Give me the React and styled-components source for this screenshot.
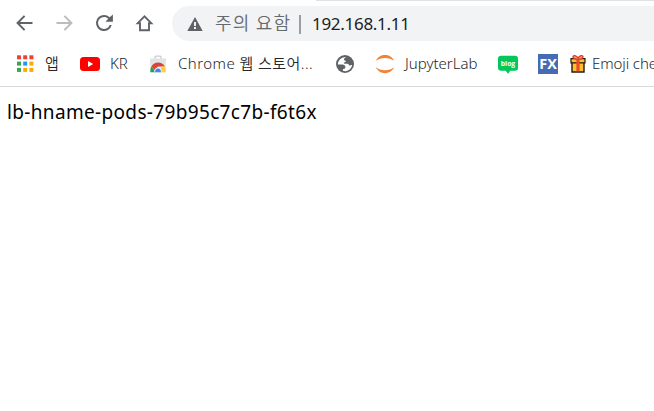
import React from "react";
import styled, { createGlobalStyle } from "styled-components";

const Global = createGlobalStyle`
  * { box-sizing: border-box; }
  html, body { margin: 0; background: #fff; overflow: hidden; }
  body { font-family: "Noto Sans", "Noto Sans CJK KR", sans-serif; }
  svg { display: block; flex: none; }
`;
const Browser = styled.div`
  width: 654px;
  height: 411px;
  overflow: hidden;
  background: #fff;
`;
const TabEdge = styled.div`
  height: 1px;
  margin-left: 316px;
  background: #dee1e6;
`;
const Toolbar = styled.header`
  display: flex;
  height: 40px;
  padding-top: 5px;
`;
const NavButtons = styled.nav`
  display: flex;
  align-items: center;
  gap: 16px;
  padding: 0 15px 1px 12px;
  width: 172px;
  flex: none;
  height: 35px;
`;
const NavButton = styled.button`
  width: 24px;
  height: 24px;
  padding: 0;
  border: 0;
  background: none;
  color: ${(p) => (p.$muted ? "#babcbe" : "#5f6368")};
`;
const Omnibox = styled.div`
  display: flex;
  align-items: center;
  flex: 1;
  height: 35px;
  padding-left: 15px;
  border-radius: 18px 0 0 18px;
  background: #f1f3f4;
  white-space: nowrap;
`;
const Warning = styled.span`
  width: 84px;
  margin-left: 12px;
  color: #66696e;
  font: 350 18px/24px "Noto Sans CJK KR", sans-serif;
  letter-spacing: 1.2px;
  margin-top: -3px;
`;
const Divider = styled.span`
  width: 2px;
  height: 19px;
  background: #9b9ea2;
  margin: 1px 11px 0 0;
`;
const Address = styled.span`
  color: #202124;
  font-size: 17px;
  line-height: 24px;
  letter-spacing: -0.3px;
`;
const Bookmarks = styled.div`
  display: flex;
  align-items: center;
  height: 46px;
  padding-left: 15px;
  border-bottom: 1px solid #d9dadc;
`;
const Bookmark = styled.div`
  display: flex;
  align-items: center;
  flex: none;
  width: ${(p) => p.$width}px;
  gap: ${(p) => p.$gap || 10}px;
`;
const Label = styled.span`
  color: #24272b;
  font: 350 15px/20px "Noto Sans", "Noto Sans CJK KR", sans-serif;
  letter-spacing: ${(p) => p.$track || 0}px;
  white-space: nowrap;
  margin-top: -2px;
`;
const Page = styled.main`
  padding: 12px 7px;
  color: #000;
  font-size: 19px;
  line-height: 26px;
  letter-spacing: 0.34px;
`;

const Back = () => (
  <svg width="24" height="24" fill="none" stroke="currentColor" strokeWidth="2"><path d="M20.5 12H6M12.6 4.9 5.6 12l7 7.1" /></svg>
);
const Forward = () => (
  <svg width="24" height="24" fill="none" stroke="currentColor" strokeWidth="2"><path d="M4.5 12H19M12.4 4.9l7 7.1-7 7.1" /></svg>
);
const Reload = () => (
  <svg width="24" height="24" fill="currentColor"><path d="M17.65 6.35A7.96 7.96 0 0 0 12 4a8 8 0 1 0 7.73 10h-2.08A6 6 0 1 1 12 6c1.66 0 3.14.69 4.22 1.78L13.5 10.8h7.4V3.5z" /></svg>
);
const Home = () => (
  <svg width="24" height="24" fill="none" stroke="currentColor" strokeWidth="1.9"><path d="M5.7 12.2H8v7h9v-7h2.3L12.5 5.3z" /></svg>
);
const Triangle = () => (
  <svg width="16" height="16"><path d="M8 1 15.7 15H.3z" fill="#5f6368" /><path d="M7 6h2v4H7zm0 5h2v2H7z" fill="#f1f3f4" /></svg>
);
const dots = ["#ea4335", "#ea4335", "#ea4335", "#34a853", "#2196f3", "#fbab00", "#34a853", "#fbab00", "#fbab00"];
const Apps = () => (
  <svg width="20" height="20">
    {dots.map((c, i) => <rect key={i} x={2 + (i % 3) * 6.2} y={1.3 + Math.floor(i / 3) * 6.3} width="4" height="4" fill={c} />)}
  </svg>
);
const Youtube = () => (
  <svg width="20" height="20"><rect y="3" width="20" height="14" rx="3.5" fill="#f00" /><path d="m8 7 5.2 3L8 13z" fill="#fff" /></svg>
);
const Store = () => (
  <svg width="20" height="20">
    <path d="M7 5V3.2q0-1 1-1h4q1 0 1 1V5" fill="none" stroke="#c8cacc" strokeWidth="1.3" />
    <path d="M2 4.5h16l-.6 13.7H2.6z" fill="#e2e3e5" />
    <path d="M2.4 17.8a7.6 7.6 0 0 1 1-5.4L8 18.2H2.5z" fill="#1da45b" />
    <path d="M3.4 12.4a7.8 7.8 0 0 1 13.5 0h-7L7 16.5z" fill="#db4437" />
    <path d="M16.9 12.4q1.3 2.6.7 5.8H12l1.3-5.8z" fill="#ffcd40" />
    <path d="M6.3 18.2a3.8 3.8 0 1 1 7.4 0z" fill="#f1f1f1" />
    <path d="M7.2 18.2a2.9 2.9 0 1 1 5.6 0z" fill="#4285f4" />
  </svg>
);
const Globe = () => (
  <svg width="20" height="20">
    <circle cx="10" cy="10" r="9" fill="#5f6368" />
    <path d="M11.2 2.9c-1.2.5-2.5 1.6-2.2 2.9.2 1 1.6.4 1.7 1.5.1 1-.7 1-1.5 1.2-.6.2-.4 1.3.4 1.3h3.1c1 0 .8 1.7 2 1.8.8 0 1.3-.7 2.4-.5-.4 3.3-3.2 6-6.7 6.1-.9 0-1.8-.1-2.5-.4V15c1.2 0 2.5-.3 2.5-1.7 0-1.8-1.3-2.6-3.1-2.7H2.9c-.2-3.8 3-7.9 8.3-7.7z" fill="#fff" />
  </svg>
);
const Jupyter = () => (
  <svg width="20" height="20" fill="#f58132"><path d="M.9 6.8C4.3-1.1 15.7-1.1 19.1 6.8 14.8 2.9 5.2 2.9.9 6.8zM.9 13.2c3.4 7.9 14.8 7.9 18.2 0-4.3 3.9-13.9 3.9-18.2 0z" /></svg>
);
const Blog = () => (
  <svg width="20" height="20">
    <path d="M3 1.8h14q3 0 3 3v9q0 3-3 3h-4.7L10 19.7l-2.3-2.9H3q-3 0-3-3v-9q0-3 3-3z" fill="#03c75a" />
    <text x="2.8" y="11.7" textLength="14.4" lengthAdjust="spacingAndGlyphs" fill="#fff" fontFamily="Open Sans" fontWeight="700" fontSize="6.5">blog</text>
  </svg>
);
const Fx = () => (
  <svg width="20" height="20">
    <rect width="20" height="20" fill="#466bb3" />
    <text x="1.2" y="15.3" textLength="17.6" lengthAdjust="spacingAndGlyphs" fill="#fff" fontFamily="Open Sans" fontWeight="700" fontSize="15">FX</text>
  </svg>
);
const Gift = () => (
  <svg width="16" height="20">
    <path d="M2 8h12v10H2z" fill="#ffbf2b" stroke="#241b18" strokeWidth="1.4" />
    <path d="M1 4.7h14v4.1H1z" fill="#ffbf2b" stroke="#241b18" strokeWidth="1.2" />
    <path d="M6.4 5h3.2v12.4H6.4z" fill="#e94b2c" />
    <path d="M8 5.2C5.8 5.2 3 4.7 3 2.8 3 .9 6.5 1.3 8 4c1.5-2.7 5-3.1 5-1.2 0 1.9-2.8 2.4-5 2.4z" fill="#f2a08c" stroke="#dc3c22" strokeWidth="1.3" />
  </svg>
);

export default function App() {
  return (
    <Browser>
      <Global />
      <TabEdge />
      <Toolbar>
        <NavButtons>
          <NavButton aria-label="Back"><Back /></NavButton>
          <NavButton $muted aria-label="Forward"><Forward /></NavButton>
          <NavButton aria-label="Reload"><Reload /></NavButton>
          <NavButton aria-label="Home"><Home /></NavButton>
        </NavButtons>
        <Omnibox>
          <Triangle /><Warning>주의 요함</Warning><Divider /><Address>192.168.1.11</Address>
        </Omnibox>
      </Toolbar>
      <Bookmarks>
        <Bookmark $width={65}><Apps /><Label>앱</Label></Bookmark>
        <Bookmark $width={68}><Youtube /><Label>KR</Label></Bookmark>
        <Bookmark $width={187}><Store /><Label $track={0.45}>Chrome 웹 스토어...</Label></Bookmark>
        <Bookmark $width={40}><Globe /></Bookmark>
        <Bookmark $width={123}><Jupyter /><Label>JupyterLab</Label></Bookmark>
        <Bookmark $width={40}><Blog /></Bookmark>
        <Bookmark $width={32}><Fx /></Bookmark>
        <Bookmark $width={84} $gap={6}><Gift /><Label $track={-0.1}>Emoji che</Label></Bookmark>
      </Bookmarks>
      <Page>lb-hname-pods-79b95c7c7b-f6t6x</Page>
    </Browser>
  );
}
